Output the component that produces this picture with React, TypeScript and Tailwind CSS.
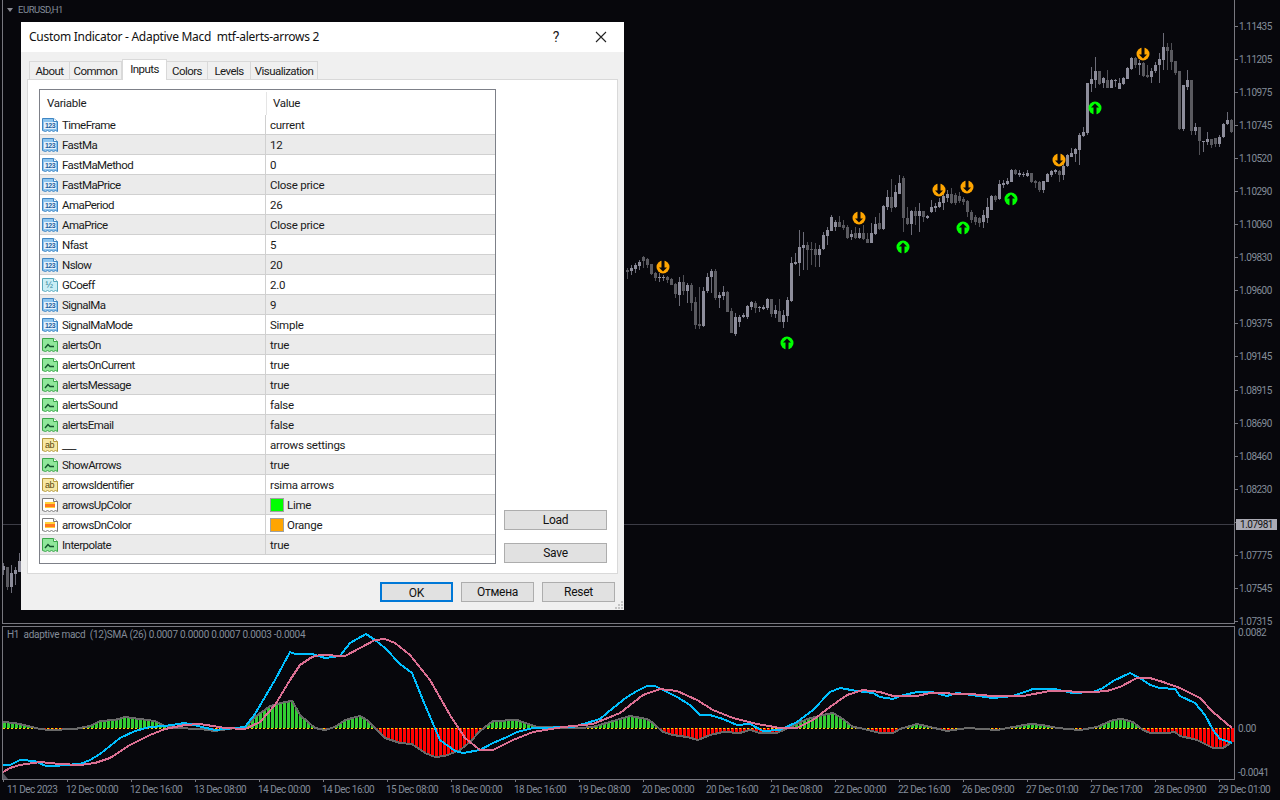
type Bar = [number, number, number, number, number];

// wick top, body top, body bottom, wick bottom, dark. Units are 1/3 px from the row's base y.
const earlyBars: Bar[] = [
  [295, 300, 306, 327, 1], [285, 294, 303, 315, 0], [280, 285, 297, 310, 0], [270, 276, 288, 300, 0], [258, 262, 273, 295, 1],
  [265, 267, 285, 295, 1], [282, 282, 313, 315, 1], [305, 309, 323, 333, 1], [310, 321, 323, 335, 0], [315, 321, 323, 332, 0],
  [318, 321, 330, 340, 1], [325, 327, 345, 345, 1], [340, 343, 372, 385, 1], [322, 336, 375, 407, 0], [315, 336, 363, 375, 1],
  [340, 345, 363, 400, 0], [340, 345, 398, 422, 1], [380, 396, 465, 478, 1], [350, 462, 468, 478, 1], [350, 363, 468, 470, 0],
  [310, 321, 363, 368, 0], [298, 303, 321, 370, 0], [298, 303, 385, 390, 1], [365, 375, 385, 415, 0], [348, 366, 378, 390, 0],
  [363, 366, 426, 427, 1], [415, 423, 490, 490, 1], [430, 441, 492, 497, 0], [435, 441, 456, 470, 0], [430, 435, 441, 445, 0],
  [405, 408, 441, 447, 0], [392, 396, 411, 420, 0], [392, 399, 414, 430, 1], [408, 411, 414, 425, 0], [405, 411, 417, 420, 0],
  [385, 387, 414, 420, 0], [387, 387, 432, 440, 1], [405, 420, 432, 445, 0], [387, 423, 456, 450, 1], [420, 435, 456, 473, 0],
  [380, 390, 438, 455, 0], [260, 279, 393, 395, 0], [250, 276, 282, 285, 0], [180, 231, 279, 318, 0], [185, 225, 234, 300, 0],
  [215, 225, 240, 300, 1], [215, 237, 240, 285, 1], [220, 237, 255, 290, 1], [225, 237, 255, 290, 0], [185, 195, 237, 240, 0],
  [170, 180, 198, 225, 0], [135, 141, 183, 183, 0], [150, 156, 171, 183, 0], [138, 156, 171, 170, 1], [150, 165, 174, 180, 1],
  [165, 171, 204, 207, 1], [180, 192, 201, 210, 0], [170, 189, 204, 207, 1], [175, 189, 204, 207, 0], [165, 189, 207, 210, 1],
  [190, 207, 218, 218, 1], [160, 189, 219, 220, 0], [140, 162, 192, 195, 0], [130, 159, 177, 180, 1], [105, 108, 177, 180, 0],
  [60, 81, 111, 120, 0], [27, 81, 114, 125, 1], [45, 66, 111, 115, 0], [15, 39, 72, 70, 0], [18, 24, 144, 185, 1],
  [110, 144, 162, 165, 1], [120, 123, 162, 195, 0], [110, 123, 138, 165, 1], [100, 123, 138, 185, 0], [123, 123, 141, 155, 1],
  [135, 138, 144, 148, 0], [90, 111, 126, 130, 0], [100, 108, 114, 125, 0], [85, 96, 111, 115, 0],
];

const lateBars: Bar[] = [
  [510, 528, 550, 570, 0], [510, 522, 534, 545, 0], [505, 522, 549, 552, 1], [520, 525, 550, 555, 1], [515, 528, 543, 550, 1],
  [530, 537, 546, 555, 1], [540, 543, 575, 590, 1], [570, 575, 600, 610, 1], [585, 590, 605, 615, 1], [590, 595, 610, 620, 1],
  [570, 585, 605, 625, 0], [535, 560, 595, 610, 0], [525, 528, 570, 570, 0], [525, 528, 540, 545, 1], [480, 492, 537, 540, 0],
  [480, 489, 495, 505, 0], [475, 483, 492, 495, 0], [447, 450, 486, 487, 0], [447, 450, 462, 465, 1], [450, 459, 465, 470, 0],
  [455, 462, 465, 470, 0], [450, 459, 468, 470, 0], [458, 459, 486, 490, 1], [480, 483, 488, 505, 1], [483, 486, 510, 515, 1],
  [483, 483, 510, 520, 0], [460, 462, 486, 487, 0], [450, 453, 465, 470, 0], [447, 450, 456, 462, 0], [450, 453, 465, 485, 1],
  [432, 438, 465, 480, 0], [403, 405, 438, 440, 0], [385, 399, 411, 412, 0], [385, 387, 402, 425, 0], [340, 345, 390, 435, 0],
  [320, 336, 348, 350, 0], [188, 189, 339, 345, 0], [140, 177, 192, 215, 0], [110, 153, 180, 205, 0], [153, 153, 192, 195, 1],
  [170, 174, 189, 205, 0], [150, 180, 204, 205, 1], [178, 180, 204, 205, 0], [178, 180, 183, 200, 0], [175, 189, 207, 207, 0],
  [170, 174, 192, 195, 0], [140, 144, 177, 178, 0], [112, 114, 147, 150, 0], [112, 114, 135, 145, 1], [120, 129, 135, 165, 0],
  [125, 129, 168, 170, 1], [135, 165, 171, 175, 1], [145, 153, 171, 190, 0], [125, 135, 153, 160, 0], [100, 117, 135, 190, 0],
  [40, 81, 120, 150, 0], [70, 81, 93, 150, 1], [70, 90, 126, 150, 1], [122, 123, 160, 165, 1], [153, 153, 327, 330, 1],
  [195, 195, 327, 333, 0], [150, 180, 201, 210, 0], [180, 180, 333, 345, 1], [310, 321, 333, 345, 0], [320, 321, 363, 405, 1],
  [362, 363, 366, 395, 0], [335, 357, 366, 375, 0], [357, 357, 375, 383, 1], [355, 354, 372, 380, 1], [345, 351, 372, 380, 0],
  [310, 312, 351, 355, 0], [277, 300, 312, 315, 0], [297, 300, 336, 340, 1],
];

const leftBars: Bar[] = [
  [160, 168, 180, 195, 0], [170, 170, 230, 240, 1], [165, 188, 232, 248, 0], [172, 180, 192, 225, 0], [130, 153, 185, 185, 0],
];

const upArrows = [[787, 343], [903, 247], [963, 228], [1011, 199], [1095, 108]];
const downArrows = [[663, 267], [859, 218], [939, 190], [967, 187], [1059, 160], [1143, 54]];

// the empty slot sits behind the current price tag
const prices = [
  "1.11435", "1.11205", "1.10975", "1.10745", "1.10520", "1.10290", "1.10060", "1.09830", "1.09600", "1.09375",
  "1.09145", "1.08915", "1.08690", "1.08460", "1.08230", "", "1.07775", "1.07545", "1.07315",
];

const dates = [
  "11 Dec 2023", "12 Dec 00:00", "12 Dec 16:00", "13 Dec 08:00", "14 Dec 00:00", "14 Dec 16:00", "15 Dec 08:00",
  "18 Dec 00:00", "18 Dec 16:00", "19 Dec 08:00", "20 Dec 00:00", "20 Dec 16:00", "21 Dec 08:00", "22 Dec 00:00",
  "22 Dec 16:00", "26 Dec 09:00", "27 Dec 01:00", "27 Dec 17:00", "28 Dec 09:00", "29 Dec 01:00",
];

const macd = [
  [3, 765], [10, 765], [20, 760], [35, 761], [46, 766], [55, 766], [65, 765], [80, 764], [90, 760], [100, 754], [120, 738], [135, 731],
  [150, 727], [165, 726], [185, 723], [215, 730], [235, 728], [245, 727], [255, 714], [275, 680], [290, 652], [295, 654], [312, 654],
  [325, 658], [340, 656], [350, 643], [366, 634], [375, 640], [385, 648], [400, 664], [412, 673], [425, 705], [440, 740], [455, 751],
  [463, 753], [480, 750], [493, 743], [507, 737], [517, 732], [533, 728], [573, 727], [600, 719], [613, 708], [627, 697], [637, 691],
  [647, 686], [655, 686], [677, 697], [690, 705], [700, 715], [710, 715], [723, 719], [737, 725], [750, 724], [763, 731], [780, 730],
  [797, 722], [813, 710], [830, 692], [840, 688], [857, 691], [873, 693], [880, 697], [893, 699], [900, 696],
  [917, 692], [932, 692], [947, 696], [957, 693], [993, 698], [1013, 696], [1033, 689], [1055, 689], [1072, 693], [1093, 692],
  [1103, 688], [1113, 681], [1130, 673], [1143, 680], [1150, 685], [1160, 688], [1175, 689], [1180, 696], [1195, 703], [1205, 715],
  [1213, 730], [1220, 739], [1227, 741], [1232, 743],
];

const signal = [
  [3, 772], [10, 768], [20, 765], [40, 762], [60, 764], [80, 765], [95, 763], [110, 758], [130, 745], [150, 735], [165, 729], [185, 725],
  [200, 724], [225, 728], [245, 729], [260, 722], [275, 705], [290, 680], [300, 665], [312, 657], [320, 655], [345, 656], [360, 648],
  [375, 640], [385, 639], [395, 643], [410, 655], [430, 680], [450, 715], [465, 738], [480, 750], [493, 750], [513, 740], [533, 732],
  [563, 727], [593, 724], [620, 713], [643, 695], [660, 689], [677, 691], [697, 700], [713, 710], [733, 718], [757, 724], [780, 728],
  [797, 728], [813, 720], [830, 707], [847, 695], [863, 690], [880, 692], [893, 696], [917, 696],
  [930, 693], [970, 694], [993, 696], [1023, 696], [1050, 691], [1093, 692], [1107, 691], [1120, 687], [1137, 678], [1150, 678],
  [1163, 682], [1180, 688], [1200, 698], [1213, 712], [1232, 728],
];

const histogram = [
  [3, 722], [15, 723], [28, 726], [40, 729], [50, 730], [75, 729], [90, 726], [100, 721], [115, 720], [125, 717], [140, 719], [155, 721],
  [165, 726], [175, 728], [200, 729], [215, 731], [235, 728], [245, 727], [255, 717], [270, 706], [285, 702], [292, 701], [300, 715],
  [315, 728], [325, 730], [335, 727], [345, 720], [360, 716], [367, 720], [375, 728], [385, 738], [400, 743], [412, 744], [425, 753],
  [435, 757], [445, 756], [460, 750], [470, 742], [480, 731], [493, 721], [517, 720], [537, 727], [580, 728], [593, 727], [613, 721],
  [630, 716], [647, 719], [653, 723], [663, 732], [673, 735], [687, 737], [698, 740], [710, 735], [723, 732], [740, 733], [750, 730],
  [760, 733], [777, 733], [790, 727], [807, 719], [823, 715], [833, 713], [843, 719], [853, 727], [860, 728], [880, 733], [893, 733],
  [900, 729], [917, 724], [930, 727], [947, 731], [967, 728], [997, 730], [1013, 727], [1030, 724], [1043, 725], [1057, 728], [1080, 730],
  [1097, 727], [1113, 720], [1122, 719], [1133, 722], [1143, 730], [1150, 733], [1167, 733], [1175, 732], [1180, 736], [1197, 740],
  [1213, 748], [1223, 748], [1232, 742],
];

const rows = [
  ["TimeFrame", "current", "num"], ["FastMa", "12", "num"], ["FastMaMethod", "0", "num"], ["FastMaPrice", "Close price", "num"],
  ["AmaPeriod", "26", "num"], ["AmaPrice", "Close price", "num"], ["Nfast", "5", "num"], ["Nslow", "20", "num"],
  ["GCoeff", "2.0", "frac"], ["SignalMa", "9", "num"], ["SignalMaMode", "Simple", "num"], ["alertsOn", "true", "bool"],
  ["alertsOnCurrent", "true", "bool"], ["alertsMessage", "true", "bool"], ["alertsSound", "false", "bool"], ["alertsEmail", "false", "bool"],
  ["___", "arrows settings", "text"], ["ShowArrows", "true", "bool"], ["arrowsIdentifier", "rsima arrows", "text"],
  ["arrowsUpColor", "Lime", "color"], ["arrowsDnColor", "Orange", "color"], ["Interpolate", "true", "bool"],
];

const tabs = [
  ["About", "w-[41px]"], ["Common", "w-[52px]"], ["Inputs", "w-[45px]"], ["Colors", "w-[41px]"], ["Levels", "w-[43px]"], ["Visualization", "w-[67px]"],
];

const points = (line: number[][]) => line.map((p) => p.join(",")).join(" ");

function valueAt(line: number[][], x: number) {
  for (let i = 1; i < line.length; i++) {
    if (x <= line[i][0]) {
      const [x0, y0] = line[i - 1];
      const [x1, y1] = line[i];
      return y0 + ((y1 - y0) * (x - x0)) / (x1 - x0);
    }
  }
  return line[line.length - 1][1];
}

function Candles({ bars, startX, baseY }: { bars: Bar[]; startX: number; baseY: number }) {
  const y = (v: number) => Math.round(baseY + v / 3);
  return (
    <>
      {bars.map((b, i) => {
        const x = startX + i * 4;
        const wick = b[4] ? "#4f4f55" : "#6c6c78";
        const body = b[4] ? "#5a5a60" : "#8d8d9b";
        return (
          <g key={i}>
            <rect x={x} y={y(b[0])} width={1} height={Math.max(y(b[3]) - y(b[0]), 1)} fill={wick} />
            <rect x={x - 1} y={y(b[1])} width={3} height={Math.max(y(b[2]) - y(b[1]), 1)} fill={body} />
          </g>
        );
      })}
    </>
  );
}

function ArrowMark({ x, y, up }: { x: number; y: number; up: boolean }) {
  const color = up ? "#00ff00" : "#ffa500";
  return (
    <g transform={`translate(${x} ${y})${up ? "" : " scale(1 -1)"}`}>
      <circle r={6.5} fill={color} />
      <path d="M0 -4.5 L4 -0.5 L1.5 -0.5 L1.5 7 L-1.5 7 L-1.5 -0.5 L-4 -0.5 Z" fill="#07070c" />
    </g>
  );
}

function PriceChart() {
  return (
    <svg width={1231} height={620} viewBox="3 0 1231 620" className="block">
      <rect x={3} y={524} width={1231} height={1} fill="#3c3c46" />
      <Candles bars={leftBars} startX={3} baseY={510} />
      <Candles bars={earlyBars} startX={627} baseY={170} />
      <Candles bars={lateBars} startX={943} baseY={20} />
      {upArrows.map(([x, y]) => (
        <ArrowMark key={x} x={x} y={y} up />
      ))}
      {downArrows.map(([x, y]) => (
        <ArrowMark key={x} x={x} y={y} up={false} />
      ))}
    </svg>
  );
}

function MacdChart() {
  const bars = [];
  for (let x = 3; x < 1232; x += 4) bars.push(x);
  return (
    <svg width={1231} height={152} viewBox="3 627 1231 152" className="block">
      {bars.map((x) => {
        const v = Math.round(valueAt(histogram, x + 1));
        const above = v < 728;
        return (
          <rect
            key={x}
            x={x}
            y={above ? v : 728}
            width={3}
            height={Math.abs(v - 728)}
            fill={above ? "#32cd32" : "#ff0000"}
          />
        );
      })}
      <line x1={3} y1={728.5} x2={1232} y2={728.5} stroke="#ffd800" strokeDasharray="2 2" />
      <polyline points={points(histogram)} fill="none" stroke="#696969" strokeWidth={2} shapeRendering="crispEdges" />
      <polyline points={points(macd)} fill="none" stroke="#00bfff" strokeWidth={2} shapeRendering="crispEdges" />
      <polyline points={points(signal)} fill="none" stroke="#db7093" strokeWidth={2} shapeRendering="crispEdges" />
      <path d="M3 773 L8 779 L3 779 Z" fill="#555560" />
    </svg>
  );
}

const iconStyle: Record<string, { fill: string; edge: string }> = {
  num: { fill: "#8cc4ee", edge: "#3f86c4" },
  frac: { fill: "#c9eef5", edge: "#58a9bd" },
  bool: { fill: "#8fe79a", edge: "#3ba64a" },
  text: { fill: "#f7e8a4", edge: "#b49a3f" },
  color: { fill: "#ffffff", edge: "#7a7a7a" },
};

function ParamIcon({ kind }: { kind: string }) {
  const { fill, edge } = iconStyle[kind];
  return (
    <svg width={16} height={16} viewBox="0 0 16 16" className="shrink-0">
      <path
        d="M0.5 1.5 H11.5 L15.5 4.5 V14.5 L13.5 13.5 L11.5 14.5 L9.5 13.5 L7.5 14.5 L5.5 13.5 L3.5 14.5 L0.5 13.5 Z"
        fill={fill}
        stroke={edge}
      />
      <path d="M11.5 1.5 V4.5 H15.5" fill="#ffffff" stroke={edge} />
      {kind === "num" && (
        <>
          <rect x={2} y={5} width={12} height={7} fill="#e4f1fb" />
          <text x={8} y={11} textAnchor="middle" fontSize={7} fontWeight={700} fill="#1f5f9e" fontFamily="Liberation Sans, sans-serif">
            123
          </text>
        </>
      )}
      {kind === "frac" && (
        <text x={7} y={11} textAnchor="middle" fontSize={9} fill="#2b7f96" fontFamily="Liberation Sans, sans-serif">
          ½
        </text>
      )}
      {kind === "bool" && <path d="M3 11 L6 7.5 L8 9.5 H12" fill="none" stroke="#14532d" strokeWidth={1.4} />}
      {kind === "text" && (
        <text x={7.5} y={11} textAnchor="middle" fontSize={9} fill="#5c4a10" fontFamily="Liberation Sans, sans-serif">
          ab
        </text>
      )}
      {kind === "color" && (
        <>
          <rect x={3} y={5} width={10} height={2} fill="#ffd23a" />
          <rect x={3} y={7} width={10} height={3} fill="#ff7a1e" />
          <rect x={3} y={10} width={10} height={1} fill="#ffd23a" />
        </>
      )}
    </svg>
  );
}

function WinButton({ label, wide, primary }: { label: string; wide?: boolean; primary?: boolean }) {
  return (
    <button
      className={`h-[20px] bg-[#e1e1e1] text-[12px] tracking-[-0.25px] text-[#111] ${wide ? "w-[103px]" : "w-[73px]"} ${
        primary ? "border-2 border-[#0078d7]" : "border border-[#adadad]"
      }`}
    >
      {label}
    </button>
  );
}

function ParamRow({ row, index }: { row: string[]; index: number }) {
  const [name, value, kind] = row;
  const swatch = value === "Lime" ? "bg-[#00ff00]" : value === "Orange" ? "bg-[#ffa500]" : "";
  return (
    <div className={`flex h-[20px] border-b border-[#d0d0d0] ${index % 2 ? "bg-[#ebebeb]" : "bg-white"}`}>
      <div className="flex w-[226px] shrink-0 items-center gap-[4px] border-r border-[#d0d0d0] pl-[2px] tracking-[-0.55px]">
        <ParamIcon kind={kind} />
        <span className="mt-[2px]">{name}</span>
      </div>
      <div className="flex flex-1 items-center pl-[4px] tracking-[-0.25px]">
        {swatch && <span className={`mr-[3px] h-[14px] w-[14px] border border-[#a0a0a0] ${swatch}`} />}
        <span className="mt-[2px]">{value}</span>
      </div>
    </div>
  );
}

function IndicatorDialog() {
  return (
    <div className="absolute left-[21px] top-[22px] flex h-[588px] w-[603px] flex-col bg-[#f0f0f0] font-['Roboto',sans-serif] text-[11.5px] tracking-[-0.3px] text-[#1a1a1a]">
      <div className="flex h-[30px] shrink-0 items-center bg-white pl-[8px]">
        <span className="whitespace-pre font-['Noto_Sans',sans-serif] text-[12px] tracking-[-0.28px] text-[#111]">Custom Indicator - Adaptive Macd  mtf-alerts-arrows 2</span>
        <span className="ml-auto w-[20px] text-center text-[14px]">?</span>
        <svg width={12} height={12} viewBox="0 0 12 12" className="ml-[29px] mr-[17px]">
          <path d="M1 1 L11 11 M11 1 L1 11" stroke="#222" strokeWidth={1.1} />
        </svg>
      </div>
      <div className="flex h-[27px] shrink-0 items-end pl-[8px] tracking-[-0.55px]">
        {tabs.map(([name, width]) =>
          name === "Inputs" ? (
            <div key={name} className={`${width} relative z-10 -mb-px flex h-[21px] items-center justify-center border border-b-0 border-[#d9d9d9] bg-white`}>
              {name}
            </div>
          ) : (
            <div key={name} className={`${width} flex h-[18px] items-center justify-center border border-b-0 border-l-0 border-[#d9d9d9] pt-[2px] first:border-l`}>
              {name}
            </div>
          ),
        )}
      </div>
      <div className="ml-[6px] flex h-[495px] w-[591px] shrink-0 border border-[#d9d9d9] bg-white pb-[9px] pl-[11px] pr-[10px] pt-[9px]">
        <div className="h-full w-[457px] shrink-0 border border-[#7d8088]">
          <div className="flex h-[25px] items-center pt-[2px]">
            <div className="flex h-full w-[227px] items-center border-r border-[#e5e5e5] pl-[7px]">Variable</div>
            <div className="pl-[6px]">Value</div>
          </div>
          {rows.map((row, i) => (
            <ParamRow key={row[0]} row={row} index={i} />
          ))}
        </div>
        <div className="ml-[8px] flex flex-col justify-end gap-[13px] pb-[1px]">
          <WinButton label="Load" wide />
          <WinButton label="Save" wide />
        </div>
      </div>
      <div className="flex flex-1 items-center justify-end gap-[8px] pr-[9px] pb-[1px]">
        <WinButton label="OK" primary />
        <WinButton label="Отмена" />
        <WinButton label="Reset" />
      </div>
      <svg width={8} height={8} viewBox="0 0 8 8" className="absolute bottom-[1px] right-[1px]">
        <path d="M6 0h2v2h-2zM3 3h2v2h-2zM6 3h2v2h-2zM0 6h2v2h-2zM3 6h2v2h-2zM6 6h2v2h-2z" fill="#c4c4c4" />
      </svg>
    </div>
  );
}

export default function App() {
  return (
    <div className="relative flex h-[800px] w-[1280px] flex-col overflow-hidden bg-[#07070c] font-['Roboto',sans-serif] text-[10px] text-[#838c99]">
      <div className="flex h-[624px] shrink-0 pl-[2px]">
        <div className="relative h-full w-[1233px] shrink-0 border-b border-l border-r border-[#77777f]">
          <PriceChart />
          <div className="absolute left-[4px] top-[3px] flex items-center gap-[5px] text-[9.5px] tracking-[-0.45px]">
            <span className="h-0 w-0 border-x-[3px] border-t-[4px] border-x-transparent border-t-[#8a8a92]" />
            <span>EURUSD,H1</span>
          </div>
        </div>
        <div className="relative flex-1 pt-[10px] tracking-[-0.5px]">
          {prices.map((p, i) => (
            <div key={i} className="flex h-[33.05px] items-center">
              <span className="h-px w-[3px] bg-[#77777f]" />
              <span className="ml-[1px]">{p}</span>
            </div>
          ))}
          <div className="absolute left-[1px] top-[519px] flex h-[11px] w-[41px] items-center justify-center bg-[#aaaab4] text-[#111]">1.07981</div>
        </div>
      </div>
      <div className="mt-[2px] flex h-[154px] shrink-0 pl-[2px]">
        <div className="relative h-full w-[1233px] shrink-0 border border-[#77777f]">
          <MacdChart />
          <div className="absolute left-[4px] top-[0px] whitespace-pre tracking-[-0.28px]">H1  adaptive macd  (12)SMA (26) 0.0007 0.0000 0.0007 0.0003 -0.0004</div>
        </div>
        <div className="relative flex-1 tracking-[-0.4px]">
          <span className="absolute left-[3px] top-[-1px]">0.0082</span>
          <span className="absolute left-[3px] top-[95px]">0.00</span>
          <span className="absolute left-[3px] top-[139px]">-0.0041</span>
        </div>
      </div>
      <div className="flex flex-1 pl-[3px] tracking-[-0.5px]">
        {dates.map((d, i) => (
          <div key={d} className="w-[64px] shrink-0">
            <div className="h-[2px] w-px bg-[#77777f]" />
            <div className={`whitespace-nowrap ${i === 0 ? "pl-[4px]" : "-ml-px"}`}>{d}</div>
          </div>
        ))}
      </div>
      <IndicatorDialog />
    </div>
  );
}
